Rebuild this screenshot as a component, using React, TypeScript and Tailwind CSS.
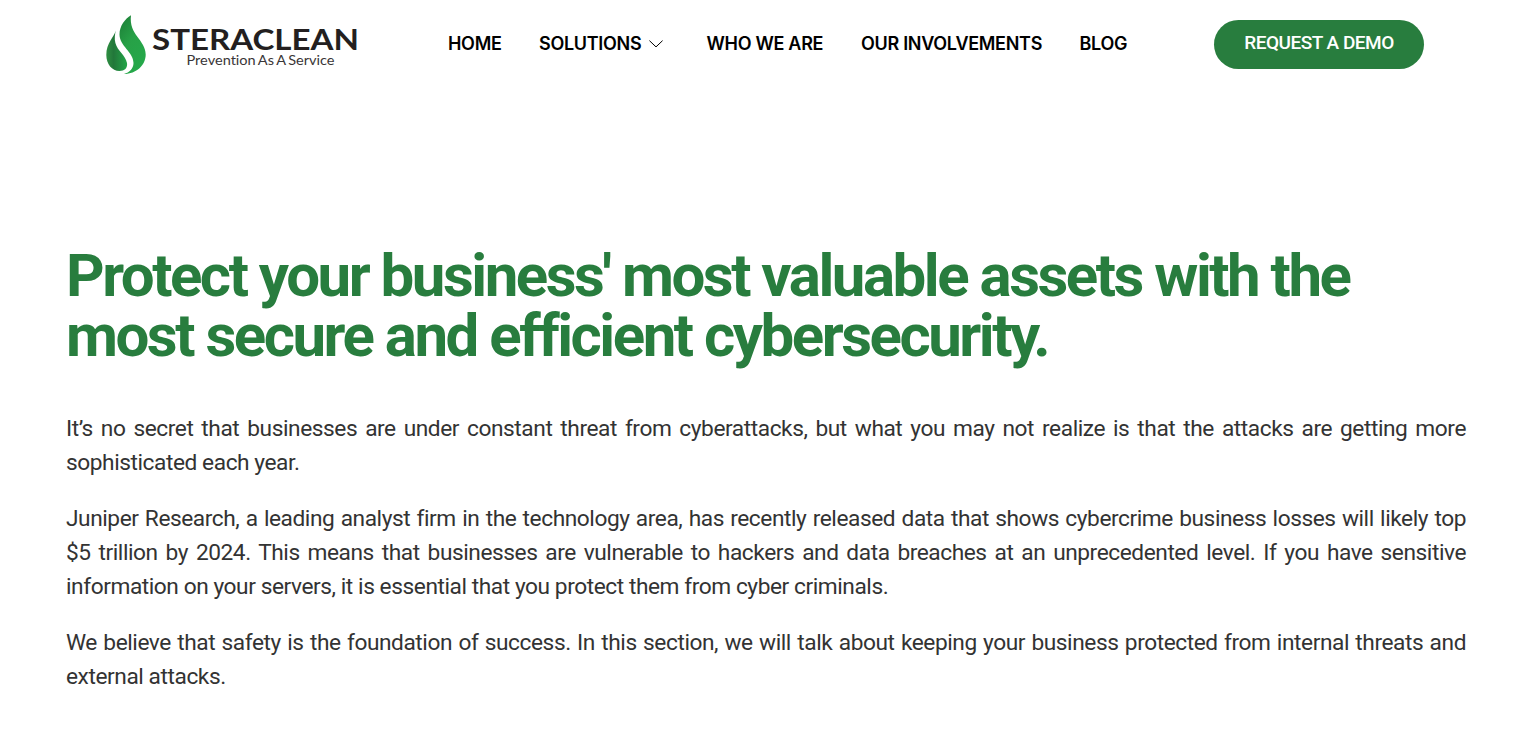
const NAV_ITEMS = [
  { label: "HOME", className: "w-[91px]" },
  { label: "SOLUTIONS", className: "w-[167.5px]", hasMenu: true },
  { label: "WHO WE ARE", className: "w-[154.5px]" },
  { label: "OUR INVOLVEMENTS", className: "w-[218.5px]" },
  { label: "BLOG", className: "w-[134.5px]" },
];

const PARAGRAPHS = [
  "It’s no secret that businesses are under constant threat from cyberattacks, but what you may not realize is that the attacks are getting more sophisticated each year.",
  "Juniper Research, a leading analyst firm in the technology area, has recently released data that shows cybercrime business losses will likely top $5 trillion by 2024. This means that businesses are vulnerable to hackers and data breaches at an unprecedented level. If you have sensitive information on your servers, it is essential that you protect them from cyber criminals.",
  "We believe that safety is the foundation of success. In this section, we will talk about keeping your business protected from internal threats and external attacks.",
];

function Logo() {
  return (
    <svg width="260" height="66" viewBox="0 0 260 66" className="block" aria-label="Steraclean">
      <defs>
        <linearGradient id="leafDark" x1="0" y1="0.5" x2="1" y2="0.5">
          <stop offset="0" stopColor="#2f8f42" />
          <stop offset="0.35" stopColor="#22773a" />
          <stop offset="1" stopColor="#23a548" />
        </linearGradient>
        <linearGradient id="leafLight" x1="0" y1="0" x2="0.6" y2="1">
          <stop offset="0" stopColor="#1c7c36" />
          <stop offset="0.5" stopColor="#27a147" />
          <stop offset="1" stopColor="#25a84a" />
        </linearGradient>
      </defs>
      <path
        d="M15.8 20.5 C14 27 6.3 33 6.3 45 C6.3 54 12 61 19.5 61 C24.5 61 27.8 58 27 53 C25.5 45 17.5 41 15.4 33 C14.2 28.5 15 24 15.8 20.5 Z"
        fill="url(#leafDark)"
      />
      <path
        d="M31 5.3 C25 9 19.5 16 19.5 24.5 C19.5 36 33.5 42 33.5 53 C33.5 58.5 29.5 62.5 24 64 C36.5 64 45.7 55 45.7 44.5 C45.7 30 28.5 25 31 5.3 Z"
        fill="url(#leafLight)"
      />
      <text
        x="52"
        y="39.5"
        textLength="207"
        lengthAdjust="spacingAndGlyphs"
        className="fill-[#231f20] font-['Lato',sans-serif] text-[28.5px] font-bold"
      >
        STERACLEAN
      </text>
      <text
        x="86.5"
        y="54.5"
        textLength="148"
        lengthAdjust="spacingAndGlyphs"
        className="fill-[#3a3637] font-['Lato',sans-serif] text-[13px] [font-variant-ligatures:none] [word-spacing:-1px]"
      >
        Prevention As A Service
      </text>
    </svg>
  );
}

function MenuArrow() {
  return (
    <svg
      width="14"
      height="8"
      viewBox="0 0 14 8"
      className="ml-2"
      fill="none"
      stroke="currentColor"
      strokeWidth="1"
      strokeLinecap="round"
      strokeLinejoin="round"
    >
      <path d="M0.7 0.9 L7 6.9 L13.3 0.9" />
    </svg>
  );
}

export default function App() {
  return (
    <div className="min-h-[750px] overflow-hidden bg-white font-['Roboto',sans-serif]">
      <header className="flex items-start pl-[100px]">
        <a href="#" className="mt-[10px] w-[348px] shrink-0">
          <Logo />
        </a>
        <nav className="mt-[30px] flex shrink-0">
          {NAV_ITEMS.map((item) => (
            <a
              key={item.label}
              href="#"
              className={`flex shrink-0 items-center whitespace-nowrap font-['Inter',sans-serif] text-[18px] leading-7 font-semibold tracking-[-0.3px] text-black ${item.className}`}
            >
              {item.label}
              {item.hasMenu && <MenuArrow />}
            </a>
          ))}
        </nav>
        <a
          href="#"
          className="mt-5 flex h-[49px] w-[210px] shrink-0 items-center justify-center rounded-full bg-[#287d3e] pb-0.5 text-[19px] font-medium tracking-[-0.5px] whitespace-nowrap text-white"
        >
          REQUEST A DEMO
        </a>
      </header>

      <main className="ml-[66px] w-[1400px] pt-[170px]">
        <h1 className="text-[60px] leading-[60px] font-bold tracking-[-2.49px] text-[#287d3e]">
          Protect your business' most valuable assets with the
          <br />
          most secure and efficient cybersecurity.
        </h1>
        <div className="mt-[46px] space-y-[22px] text-justify text-[22.7px] leading-[34px] tracking-[-0.43px] text-[#333333]">
          {PARAGRAPHS.map((text) => (
            <p key={text}>{text}</p>
          ))}
        </div>
      </main>
    </div>
  );
}
